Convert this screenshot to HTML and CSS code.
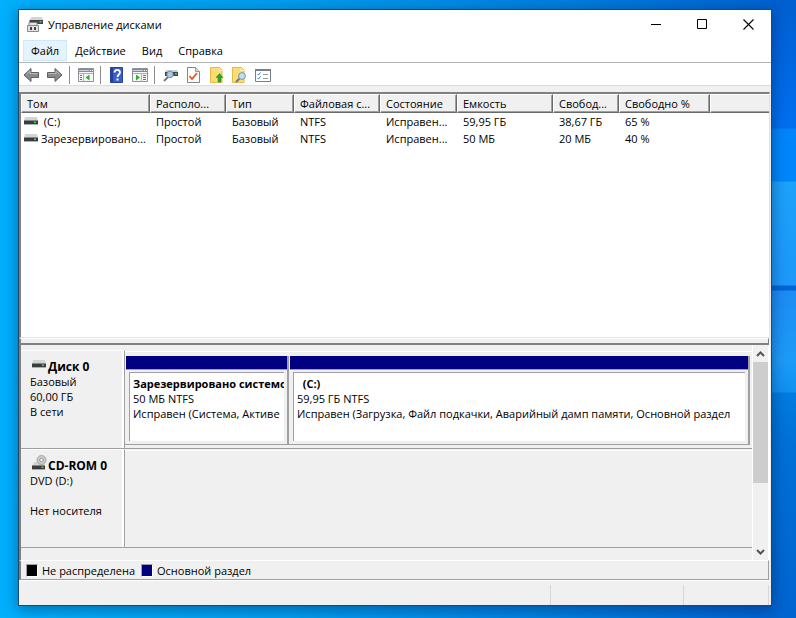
FILE: index.html
```
<!DOCTYPE html>
<html lang="ru">
<head>
<meta charset="UTF-8">
<meta name="viewport" content="width=device-width, initial-scale=1.0">
<title>Управление дисками</title>
<link rel="stylesheet" href="styles.css">
</head>
<body>
<!-- shared drive icons -->
<svg class="defs" width="0" height="0">
  <symbol id="drive" viewBox="0 0 14 8">
    <path d="M1 0h12l1 4H0z" fill="#d4d4d4"/>
    <path d="M0 3.500h14V7H0z" fill="#3c3c3c"/>
    <path d="M0 7h14v1H0z" fill="#b0b0b0"/>
    <path d="M10 4.500h2v1.500h-2z" fill="#2fe04a"/>
  </symbol>
  <symbol id="cdrom" viewBox="0 0 15 15">
    <path d="M2 7h10l1 4H0z" fill="#d4d4d4"/>
    <circle cx="9.500" cy="5" r="4.500" fill="#c9cdce" stroke="#999" stroke-width=".8"/>
    <circle cx="9.500" cy="5" r="1.800" fill="#f4f4f4" stroke="#888" stroke-width=".8"/>
    <path d="M0 10.500h13V14H0z" fill="#3c3c3c"/>
    <path d="M0 14h13v1H0z" fill="#aaa"/>
    <path d="M9.500 11.500h2V13h-2z" fill="#2fe04a"/>
  </symbol>
</svg>

<main class="window">
  <header class="titlebar">
    <svg class="app-icon" width="17" height="16" viewBox="0 0 17 16">
      <path d="M4.500 1h10l2 3H2.500z" fill="#d4d4d4"/>
      <path d="M2.500 4H16v4H2.500z" fill="#444"/>
      <path d="M12.500 5h2v1.500h-2z" fill="#2fe04a"/>
      <path d="M2 6.500h8V10H2z" fill="#e4e4e4" stroke="#888"/>
      <path d="M.5 9.500h11v6H.5z" fill="#e2e2e2" stroke="#8a8a8a"/>
      <path d="M3 11h2v3H3zM7 11h2v3H7z" fill="#444"/>
    </svg>
    <h1 class="title">Управление дисками</h1>
    <button class="caption-btn" aria-label="Свернуть"><svg width="11" height="11"><path d="M0 5.500h10" stroke="#000"/></svg></button>
    <button class="caption-btn" aria-label="Развернуть"><svg width="11" height="11"><path d="M.5.5h9v9h-9z" fill="none" stroke="#000"/></svg></button>
    <button class="caption-btn" aria-label="Закрыть"><svg width="11" height="11"><path d="M.5.5l10 10M10.500.5l-10 10" stroke="#000" stroke-width="1.100"/></svg></button>
  </header>

  <nav class="menu">
    <button class="menu-item active">Файл</button>
    <button class="menu-item">Действие</button>
    <button class="menu-item">Вид</button>
    <button class="menu-item">Справка</button>
  </nav>

  <div class="toolbar">
    <button class="tool" aria-label="Назад"><svg width="17" height="16" viewBox="0 0 17 16"><path d="M1 8l7-6.500v4h7.500v5H8v4z" fill="#8b8b8b" stroke="#5f5f5f"/><path d="M3.500 7.500L7 4v2.500h7.500" fill="none" stroke="#bbb"/></svg></button>
    <button class="tool" aria-label="Вперед"><svg width="17" height="16" viewBox="0 0 17 16"><path d="M16 8L9 1.500v4H1.500v5H9v4z" fill="#8b8b8b" stroke="#5f5f5f"/><path d="M2.500 6.500H10V4l3.500 3.500" fill="none" stroke="#bbb"/></svg></button>
    <span class="divider"></span>
    <button class="tool" aria-label="Дерево консоли"><svg width="16" height="14" viewBox="0 0 16 14"><path d="M.5.5h15v13H.5z" fill="#f7f7f7" stroke="#8b929b"/><path d="M1 1h14v3H1z" fill="#7d8b9f"/><path d="M1 2.500h10" stroke="#c8d0da"/><path d="M12 2.500h1M14 2.500h1" stroke="#fff"/><path d="M5.500 5v9M1 5.500h14" stroke="#a9b0b8"/><path d="M2 7.500h2M2 9.500h2M2 11.500h2" stroke="#3c7ac0"/><path d="M11.500 6.500v6L7.500 9.500z" fill="#38a832"/></svg></button>
    <span class="divider"></span>
    <button class="tool" aria-label="Справка"><svg width="13" height="16" viewBox="0 0 13 16"><path d="M.5.5h12v15H.5z" fill="#3a5fc8" stroke="#27429a"/><path d="M1 1h2v14H1z" fill="#26409a"/><path d="M4.500 5.500c0-3.500 5.500-3.500 5.500 0 0 2-2.500 2-2.500 4.500" fill="none" stroke="#fff" stroke-width="1.800"/><path d="M6.500 11.500h2v2h-2z" fill="#fff"/></svg></button>
    <button class="tool" aria-label="Панель действий"><svg width="16" height="14" viewBox="0 0 16 14"><path d="M.5.5h15v13H.5z" fill="#f7f7f7" stroke="#8b929b"/><path d="M1 1h14v3H1z" fill="#7d8b9f"/><path d="M1 2.500h10" stroke="#c8d0da"/><path d="M12 2.500h1M14 2.500h1" stroke="#fff"/><path d="M9.500 5v9M1 5.500h14" stroke="#a9b0b8"/><path d="M11 7.500h3M11 9.500h3M11 11.500h3" stroke="#3c7ac0"/><path d="M4 6.500v6l4-3z" fill="#38a832"/></svg></button>
    <span class="divider"></span>
    <button class="tool" aria-label="Повторить проверку дисков"><svg width="16" height="16" viewBox="0 0 16 16"><path d="M3 3h11l1 2H2z" fill="#ccc"/><path d="M2 5h13v4H2z" fill="#444"/><path d="M12 6h2v1.500h-2z" fill="#2fe04a"/><path d="M1 14l4-4" stroke="#777" stroke-width="2"/><circle cx="7" cy="7.500" r="3.200" fill="#a9cbe2" stroke="#6f8ea6"/></svg></button>
    <button class="tool" aria-label="Свойства"><svg width="13" height="16" viewBox="0 0 13 16"><path d="M.5.5h8l4 4v11H.5z" fill="#fcfcfc" stroke="#858585"/><path d="M8.500.5v4h4" fill="#ddd" stroke="#999"/><path d="M2.500 9l2.500 3 5-6" fill="none" stroke="#ea5527" stroke-width="1.800"/></svg></button>
    <button class="tool" aria-label="Вверх"><svg width="14" height="16" viewBox="0 0 14 16"><path d="M.5.5h9l2.500 2.500v12.500H.5z" fill="#fbdc72" stroke="#e5b94a"/><path d="M9 1v2.500h3" fill="none" stroke="#fff3c0"/><path d="M9.500 6.500l3.500 4h-2V15H8v-4.500H6z" fill="#2da52d" stroke="#1f8c24" stroke-width=".5"/></svg></button>
    <button class="tool" aria-label="Найти"><svg width="15" height="16" viewBox="0 0 15 16"><path d="M.5.5h9l2.500 2.500v12.500H.5z" fill="#fbdc72" stroke="#e5b94a"/><path d="M9 1v2.500h3" fill="none" stroke="#fff3c0"/><path d="M4 15l3.500-3.500" stroke="#777" stroke-width="2"/><circle cx="10" cy="9" r="3.400" fill="#bfe0ef" stroke="#6f98ae"/></svg></button>
    <button class="tool" aria-label="Список"><svg width="16" height="13" viewBox="0 0 16 13"><path d="M.5 1h15v11.500H.5z" fill="#fff" stroke="#77808a"/><path d="M0 1h16" stroke="#77808a" stroke-width="2"/><path d="M2.500 5l1 1 2-2.500M2.500 9l1 1 2-2.500" fill="none" stroke="#2f7fd6"/><path d="M8 5.500h5M8 9.500h5" stroke="#999"/></svg></button>
  </div>

  <section class="volumes">
    <table class="volume-table">
      <colgroup>
        <col class="c-name"><col class="c-layout"><col class="c-type"><col class="c-fs"><col class="c-state"><col class="c-size"><col class="c-free"><col class="c-pct"><col>
      </colgroup>
      <thead>
        <tr><th>Том</th><th>Располо...</th><th>Тип</th><th>Файловая с...</th><th>Состояние</th><th>Емкость</th><th>Свобод...</th><th>Свободно %</th><th></th></tr>
      </thead>
      <tbody>
        <tr><td class="name"><svg class="drive" width="14" height="8"><use href="#drive"/></svg>&nbsp;(C:)</td><td>Простой</td><td>Базовый</td><td>NTFS</td><td>Исправен...</td><td>59,95 ГБ</td><td>38,67 ГБ</td><td>65 %</td><td></td></tr>
        <tr><td class="name"><svg class="drive" width="14" height="8"><use href="#drive"/></svg>Зарезервировано...</td><td>Простой</td><td>Базовый</td><td>NTFS</td><td>Исправен...</td><td>50 МБ</td><td>20 МБ</td><td>40 %</td><td></td></tr>
      </tbody>
    </table>
  </section>
  <div class="splitter"></div>

  <section class="graph">
    <div class="disks">
      <div class="disk">
        <div class="disk-label">
          <h2 class="disk-name"><svg class="drive" width="14" height="8"><use href="#drive"/></svg>Диск 0</h2>
          <p>Базовый</p>
          <p>60,00 ГБ</p>
          <p>В сети</p>
        </div>
        <div class="partitions">
          <div class="partition small">
            <div class="bar"></div>
            <div class="info">
              <h3>Зарезервировано системо</h3>
              <p>50 МБ NTFS</p>
              <p>Исправен (Система, Активе</p>
            </div>
          </div>
          <div class="partition">
            <div class="bar"></div>
            <div class="info">
              <h3>&nbsp; (C:)</h3>
              <p>59,95 ГБ NTFS</p>
              <p>Исправен (Загрузка, Файл подкачки, Аварийный дамп памяти, Основной раздел</p>
            </div>
          </div>
        </div>
      </div>
      <div class="disk">
        <div class="disk-label">
          <h2 class="disk-name"><svg class="cdrom" width="15" height="15"><use href="#cdrom"/></svg>CD-ROM 0</h2>
          <p>DVD (D:)</p>
          <p>&nbsp;</p>
          <p>Нет носителя</p>
        </div>
        <div class="partitions"></div>
      </div>
    </div>
    <div class="scrollbar">
      <button class="scroll-btn" aria-label="Прокрутить вверх"><svg width="9" height="6"><path d="M1 5l3.500-3.500L8 5" fill="none" stroke="#555" stroke-width="2"/></svg></button>
      <div class="thumb"></div>
      <button class="scroll-btn" aria-label="Прокрутить вниз"><svg width="9" height="6"><path d="M1 1l3.500 3.500L8 1" fill="none" stroke="#555" stroke-width="2"/></svg></button>
    </div>
  </section>

  <div class="legend">
    <span class="swatch unallocated"></span>Не распределена
    <span class="swatch primary"></span>Основной раздел
  </div>

  <footer class="statusbar">
    <span class="pane wide"></span>
    <span class="pane"></span>
    <span class="pane last"></span>
  </footer>
</main>
</body>
</html>
```
FILE: styles.css
```
* {
  box-sizing: border-box;
}

body {
  margin: 0;
  padding: 9px 24px 12px 18px;
  height: 100vh;
  font-family: "Open Sans", "Noto Sans", sans-serif;
  font-size: 11px;
  line-height: 15px;
  color: #000;
  background:
    linear-gradient(to bottom, #005fd0 0, #006ff0 128px, #0086fa 129px, #0086fa 181px, #1ca2fa 182px, #1c98fa 285px, #0064d6 286px, #0064d6 290px, #1c8cf5 291px, #1c9cf8 361px, #1090f0 392px, #007ce0 393px, #0070d6 445px, #0064d0) right / 24px 100% no-repeat,
    linear-gradient(to right, #00b0fc 0%, #00a0f0 35%, #0080e0 70%, #0060d0 100%);
}

h1, h2, h3, p {
  margin: 0;
  font-size: 11px;
}

button {
  border: 0;
  padding: 0;
  background: none;
  font: inherit;
  color: inherit;
}

.defs {
  position: absolute;
}

.window {
  display: flex;
  flex-direction: column;
  height: 100%;
  border: 1px solid #1c4a6c;
  background: #f0f0f0;
  box-shadow: 0 3px 14px rgba(0, 20, 60, 0.45);
}

/* title bar */
.titlebar {
  display: flex;
  align-items: center;
  height: 30px;
  padding-left: 8px;
  background: #fff;
}

.title {
  flex: 1;
  margin: 0 0 2px 4px;
  font-weight: normal;
}

.app-icon {
  margin-bottom: 2px;
}

.caption-btn {
  display: flex;
  align-items: center;
  justify-content: center;
  width: 46px;
  height: 28px;
  margin-bottom: 2px;
}

/* menu */
.menu {
  display: flex;
  height: 23px;
  padding: 0 4px 1px;
  background: #fff;
  border-bottom: 1px solid #b4b4b4;
}

.menu-item {
  padding: 0 7px;
  border: 1px solid transparent;
}

.menu-item.active {
  background: #e5f3ff;
  border-color: #cce8ff;
}

/* toolbar */
.toolbar {
  display: flex;
  align-items: center;
  height: 23px;
  padding: 2px 1px 0;
  background: #fff;
  border-bottom: 1px solid #dcdcdc;
}

.tool {
  display: flex;
  justify-content: center;
  width: 23px;
}

.divider {
  width: 1px;
  height: 18px;
  margin: 0 4px 0 3px;
  background: #8c8c8c;
}

/* volume list */
.volumes {
  height: 246px;
  margin: 6px 1px 0 0;
  border-left: 2px solid #808080;
  border-top: 2px solid #808080;
  border-right: 1px solid #e3e3e3;
  border-bottom: 1px solid #e3e3e3;
  background: #fff;
}

.volume-table {
  width: 100%;
  table-layout: fixed;
  border-collapse: separate;
  border-spacing: 0;
}

.c-name { width: 129px; }
.c-layout { width: 76px; }
.c-type { width: 68px; }
.c-fs { width: 86px; }
.c-state { width: 77px; }
.c-size { width: 96px; }
.c-free { width: 66px; }
.c-pct { width: 91px; }

th, td {
  padding: 0 0 0 6px;
  text-align: left;
  font-weight: normal;
  white-space: nowrap;
  overflow: hidden;
}

th {
  height: 19px;
  background: #f0f0f0;
  border-top: 1px solid #fff;
  border-left: 1px solid #fff;
  border-right: 1px solid #696969;
  border-bottom: 1px solid #696969;
  box-shadow: inset -1px -1px #a0a0a0;
  padding-left: 5px;
}

th:last-child {
  border-right: 0;
  box-shadow: inset 0 -1px #a0a0a0;
}

td {
  height: 17px;
}

td.name {
  padding-left: 3px;
}

.drive {
  margin-bottom: 1px;
}

td .drive {
  margin-right: 3px;
}

.splitter {
  height: 7px;
  margin-right: 2px;
  border-top: 1px solid #fff;
  border-left: 2px solid #808080;
  border-right: 1px solid #808080;
  border-bottom: 2px solid #808080;
}

/* graphical view */
.graph {
  display: flex;
  flex: 1;
  margin-right: 1px;
  border-left: 2px solid #808080;
  border-right: 2px solid #fff;
}

.disks {
  flex: 1;
  min-width: 0;
  padding-top: 5px;
}

.disk {
  display: flex;
  height: 99px;
}

.disk-label {
  width: 104px;
  flex: none;
  padding: 8px 0 0 9px;
  border-top: 1px solid #fff;
  border-right: 1px solid #a0a0a0;
  border-bottom: 1px solid #a0a0a0;
  box-shadow: inset -2px 0 #fff;
}

.disk-name {
  height: 15px;
  font-size: 12px;
  white-space: nowrap;
}

.disk-name .drive {
  margin: 0 2px 3px 2px;
}

.disk-name .cdrom {
  margin: -5px 1px 0 2px;
}

.partitions {
  display: flex;
  flex: 1;
  min-width: 0;
  margin-top: 1px;
  padding: 4px 2px 3px 0;
  border-top: 1px solid #fff;
  border-bottom: 1px solid #a0a0a0;
}

.partition {
  display: flex;
  flex-direction: column;
  flex: 1;
  min-width: 0;
  padding-left: 1px;
  border-right: 2px solid #a0a0a0;
  border-bottom: 1px solid #a0a0a0;
}

.partition.small {
  flex: 0 0 164px;
}

.bar {
  height: 14px;
  background: #000080;
  border-bottom: 1px solid #a0a0a0;
}

.info {
  flex: 1;
  margin: 2px 3px 3px;
  padding: 3px 3px 0;
  background: #fff;
  border-top: 1px solid #a0a0a0;
  border-left: 1px solid #a0a0a0;
  white-space: nowrap;
  overflow: hidden;
}

/* scroll bar */
.scrollbar {
  display: flex;
  flex-direction: column;
  width: 16px;
  border-left: 1px solid #fff;
}

.scroll-btn {
  display: flex;
  align-items: center;
  justify-content: center;
  height: 17px;
}

.thumb {
  height: 121px;
  margin-bottom: auto;
  background: #cdcdcd;
}

/* legend */
.legend {
  display: flex;
  align-items: center;
  gap: 4px;
  height: 20px;
  margin-right: 2px;
  padding-left: 5px;
  border-left: 2px solid #808080;
  border-top: 1px solid #fff;
  border-right: 1px solid #a0a0a0;
  border-bottom: 1px solid #a0a0a0;
}

.swatch {
  width: 12px;
  height: 13px;
  border: 1px solid #a0a0a0;
  border-right-color: #fff;
  border-bottom-color: #fff;
}

.unallocated {
  background: #000;
}

.primary {
  margin-left: 2px;
  background: #000080;
}

/* status bar */
.statusbar {
  display: flex;
  height: 25px;
  margin-right: 2px;
  padding-top: 4px;
  border-top: 1px solid #fff;
}

.pane {
  width: 133px;
  border-right: 1px solid #d7d7d7;
}

.pane.wide {
  flex: 1;
}

.pane.last {
  width: 85px;
}
```
